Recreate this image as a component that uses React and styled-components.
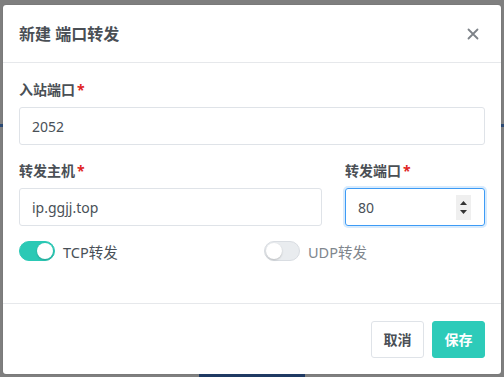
import React from 'react';
import styled, { createGlobalStyle } from 'styled-components';

const GlobalStyle = createGlobalStyle`
  html, body {
    margin: 0;
    padding: 0;
    background: #7f7f7f;
  }
  * { box-sizing: border-box; }
`;

const Backdrop = styled.div`
  width: 504px;
  height: 377px;
  padding: 5px 3px 0 3px;
  display: flex;
  flex-direction: column;
  background:
    linear-gradient(to bottom, transparent 124px, #2c4a74 124px, #2c4a74 127px, transparent 127px),
    #7f7f7f;
  font-family: "Noto Sans", "Noto Sans CJK SC", sans-serif;
  color: #495057;
`;

const Modal = styled.div`
  height: 369px;
  background: #fff;
  border-radius: 3px;
  display: flex;
  flex-direction: column;
  box-shadow: 0 0 1px rgba(0, 0, 0, 0.35);
`;

const Header = styled.div`
  height: 58px;
  flex-shrink: 0;
  display: flex;
  align-items: center;
  justify-content: space-between;
  padding: 0 22px 0 16px;
  border-bottom: 1px solid #e6e8eb;
`;

const Title = styled.h5`
  margin: 0;
  font-size: 16px;
  font-weight: 700;
  color: #4a4f55;
  padding-bottom: 2px;
`;

const Close = styled.button`
  border: none;
  background: none;
  padding: 0;
  width: 12px;
  height: 12px;
  display: flex;
  cursor: pointer;
`;

const Body = styled.div`
  flex: 1;
  padding: 16px 16px 0 16px;
`;

const Group = styled.div`
  margin-bottom: ${p => p.$mb || 15}px;
`;

const Label = styled.label`
  display: block;
  font-size: 14px;
  font-weight: 700;
  line-height: 21px;
  margin-bottom: 7px;
  color: #4a4f55;
`;

const Req = styled.span`
  color: #e02424;
  margin-left: 2px;
`;

const Row = styled.div`
  display: grid;
  grid-template-columns: ${p => p.$cols};
  column-gap: ${p => p.$gap}px;
`;

const InputBox = styled.div`
  position: relative;
  height: 38px;
  border: 1px solid ${p => (p.$focus ? '#3d9bf5' : '#dfe3e8')};
  border-radius: 3px;
  box-shadow: ${p => (p.$focus ? '0 0 0 2px rgba(61,155,245,0.2)' : 'none')};
  display: flex;
  align-items: center;
`;

const Input = styled.input`
  border: none;
  outline: none;
  background: transparent;
  width: 100%;
  height: 100%;
  padding: 0 12px;
  font-family: "Noto Sans", "Noto Sans CJK SC", sans-serif;
  font-size: 14px;
  color: #495057;
  -moz-appearance: textfield;
  &::-webkit-inner-spin-button,
  &::-webkit-outer-spin-button {
    -webkit-appearance: none;
    margin: 0;
  }
`;

const Spinner = styled.div`
  position: absolute;
  right: 13px;
  top: 6px;
  width: 15px;
  height: 25px;
  background: #efefef;
  display: flex;
  flex-direction: column;
  align-items: center;
  justify-content: center;
  gap: 5px;
`;

const SwitchRow = styled.div`
  display: flex;
  align-items: center;
  gap: 8px;
  height: 20px;
`;

const Track = styled.span`
  position: relative;
  width: 36px;
  height: 20px;
  border-radius: 10px;
  background: ${p => (p.$on ? '#2bc9b5' : '#e9ecef')};
  border: 1px solid ${p => (p.$on ? '#2bc9b5' : '#d9dde2')};
  flex-shrink: 0;
`;

const Knob = styled.span`
  position: absolute;
  top: 1px;
  left: ${p => (p.$on ? '17px' : '1px')};
  width: 16px;
  height: 16px;
  border-radius: 50%;
  background: #fff;
  box-shadow: 0 1px 2px rgba(0, 0, 0, 0.2);
`;

const SwitchText = styled.span`
  font-size: 14.5px;
  color: ${p => (p.$on ? '#495057' : '#80868d')};
`;

const Footer = styled.div`
  height: 71px;
  flex-shrink: 0;
  border-top: 1px solid #e6e8eb;
  display: flex;
  justify-content: flex-end;
  align-items: center;
  gap: 8px;
  padding: 0 16px;
`;

const Button = styled.button`
  height: 37px;
  width: 53px;
  border-radius: 3px;
  font-family: "Noto Sans", "Noto Sans CJK SC", sans-serif;
  font-size: 14px;
  font-weight: 700;
  cursor: pointer;
  border: 1px solid ${p => (p.$primary ? '#2dcbb9' : '#dfe3e8')};
  background: ${p => (p.$primary ? '#2dcbb9' : '#fff')};
  color: ${p => (p.$primary ? '#fff' : '#4a4f55')};
`;

const BottomStrip = styled.div`
  height: 3px;
  display: flex;
  justify-content: center;
`;

const PageBlock = styled.div`
  width: 106px;
  height: 3px;
  background: #1f3a63;
`;

const Switch = ({ on, label }) => (
  <SwitchRow>
    <Track $on={on}>
      <Knob $on={on} />
    </Track>
    <SwitchText $on={on}>{label}</SwitchText>
  </SwitchRow>
);

const App = () => {
  return (
    <>
      <GlobalStyle />
      <Backdrop>
        <Modal>
          <Header>
            <Title>新建 端口转发</Title>
            <Close aria-label="close">
              <svg width="12" height="12" viewBox="0 0 12 12">
                <path d="M1.5 1.5 L10.5 10.5 M10.5 1.5 L1.5 10.5" stroke="#7d8288" strokeWidth="1.8" strokeLinecap="round" />
              </svg>
            </Close>
          </Header>
          <Body>
            <Group>
              <Label>入站端口<Req>*</Req></Label>
              <InputBox>
                <Input defaultValue="2052" />
              </InputBox>
            </Group>
            <Group>
              <Row $cols="1fr 140px" $gap={23}>
                <div>
                  <Label>转发主机<Req>*</Req></Label>
                  <InputBox>
                    <Input defaultValue="ip.ggjj.top" />
                  </InputBox>
                </div>
                <div>
                  <Label>转发端口<Req>*</Req></Label>
                  <InputBox $focus>
                    <Input type="number" defaultValue="80" />
                    <Spinner>
                      <svg width="7" height="4" viewBox="0 0 7 4"><path d="M0 4 L3.5 0 L7 4 Z" fill="#333" /></svg>
                      <svg width="7" height="4" viewBox="0 0 7 4"><path d="M0 0 L7 0 L3.5 4 Z" fill="#333" /></svg>
                    </Spinner>
                  </InputBox>
                </div>
              </Row>
            </Group>
            <Row $cols="1fr 1fr" $gap={24}>
              <Switch on label="TCP转发" />
              <Switch label="UDP转发" />
            </Row>
          </Body>
          <Footer>
            <Button>取消</Button>
            <Button $primary>保存</Button>
          </Footer>
        </Modal>
        <BottomStrip>
          <PageBlock />
        </BottomStrip>
      </Backdrop>
    </>
  );
};

export default App;
